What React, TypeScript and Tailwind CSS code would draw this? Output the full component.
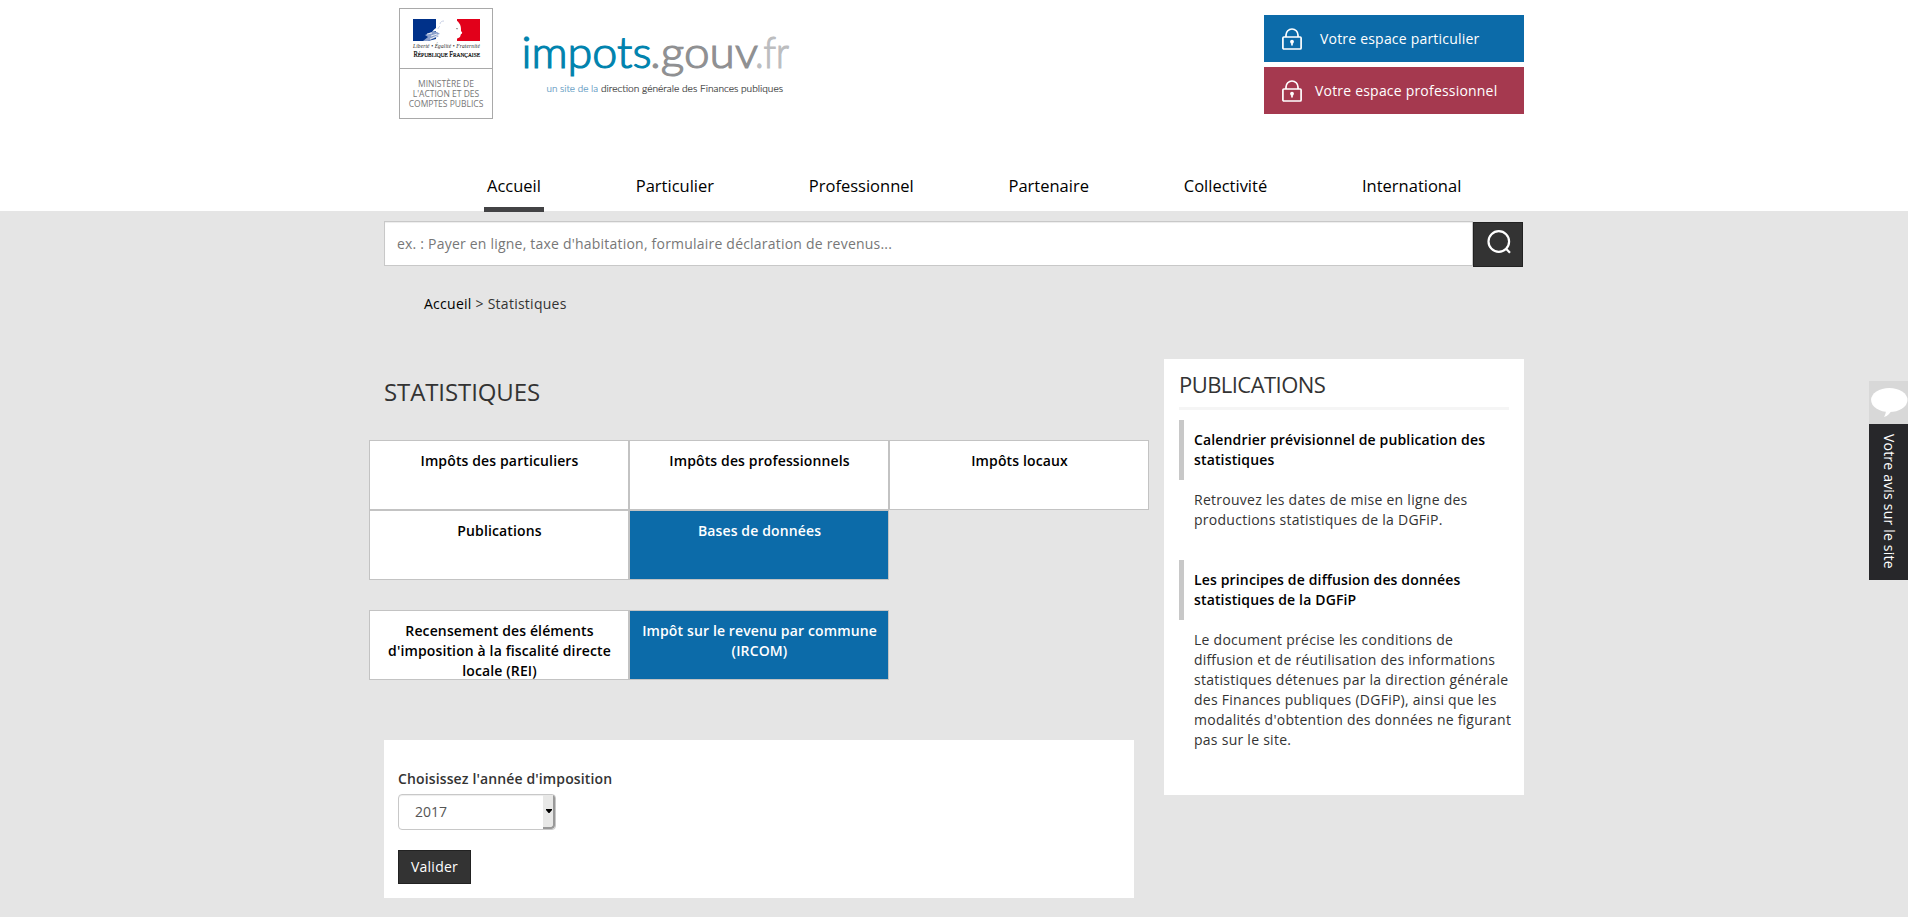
import React from "react";

function MinistryLogo() {
  return (
    <div className="flex h-[111px] w-[94px] flex-col border border-[#a9a9a9] bg-white">
      <svg width="92" height="59" viewBox="400 9 92 59" className="block">
        <rect x="413" y="19" width="23" height="22" fill="#003189" />
        <rect x="457" y="19" width="23" height="22" fill="#e2001a" />
        <path
          d="M435 19h8c-2 1-4 2-4 4-2 1-3 3-3 5-2 1-3 3-4 4 3-1 6-1 8 1l-2 3 6 1-8 2-8 2h28c0-3 3-3 4-4l1-3c1 0 2-1 0-3 0-3 0-6-2-8-1-2-3-3-5-4z"
          fill="#fff"
        />
        <path d="M425 35l6-3 6 0 3 2-4 1 3 1-4 2-7 3h-5l5-4z" fill="#8ba0cb" />
        <path d="M427 34l5-1M431 36l6-2M430 39l7-3" stroke="#fff" strokeWidth="0.8" />
        <path d="M444 21c-2 0-4 1-4 3M440 26c-1 1-2 2-2 3" stroke="#bbc4de" strokeWidth="0.8" fill="none" />
        <path d="M456 28l2 .6-1 1z" fill="#555" />
        <text x="413" y="47.6" fontFamily="Liberation Serif, serif" fontStyle="italic" fontSize="6.2" textLength="67" lengthAdjust="spacingAndGlyphs" fill="#222" letterSpacing="0.2">
          Liberté • Égalité • Fraternité
        </text>
        <text x="413.5" y="57" fontFamily="Liberation Serif, serif" fill="#000" stroke="#000" strokeWidth="0.2" textLength="66.5" lengthAdjust="spacingAndGlyphs" letterSpacing="0">
          <tspan fontSize="7.4">R</tspan>
          <tspan fontSize="6.2">ÉPUBLIQUE </tspan>
          <tspan fontSize="7.4">F</tspan>
          <tspan fontSize="6.2">RANÇAISE</tspan>
        </text>
      </svg>
      <div className="flex grow flex-col items-center border-t border-[#a9a9a9] pt-[10px] text-[8.5px] leading-[10px] tracking-[0px] text-[#777]">
        <span>MINISTÈRE DE</span>
        <span>L'ACTION ET DES</span>
        <span className="whitespace-nowrap">COMPTES PUBLICS</span>
      </div>
    </div>
  );
}

function SiteLogo() {
  return (
    <svg width="280" height="84" viewBox="515 22 280 84" className="block">
      <g fontFamily="Lato, sans-serif" fontSize="42.5" fontWeight="300" strokeWidth="1.2" letterSpacing="0">
        <text x="521.5" y="68" textLength="130" lengthAdjust="spacingAndGlyphs" fill="#0083ae" stroke="#0083ae">impots</text>
        <text x="650" y="68" textLength="108" lengthAdjust="spacingAndGlyphs" fill="#8f9092" stroke="#8f9092">.gouv</text>
        <text x="755" y="68" textLength="34" lengthAdjust="spacingAndGlyphs" fill="#bcbdbf" stroke="#bcbdbf">.fr</text>
      </g>
      <g fontFamily="Lato, sans-serif" fontSize="9.8" fontWeight="300" strokeWidth="0.2" letterSpacing="0">
        <text x="546.5" y="91.7" textLength="51.5" lengthAdjust="spacingAndGlyphs" fill="#5f9bc4" stroke="#5f9bc4">un site de la</text>
        <text x="601" y="91.7" textLength="182" lengthAdjust="spacingAndGlyphs" fill="#3c3c3c" stroke="#3c3c3c">direction générale des Finances publiques</text>
      </g>
    </svg>
  );
}

function Lock() {
  return (
    <svg width="20" height="22" viewBox="0 0 20 22" fill="none" stroke="#fff" strokeWidth="1.7" className="block">
      <rect x="0.9" y="9" width="18.2" height="12" rx="1" />
      <path d="M4 9V7a6 6 0 0 1 12 0v2" />
      <circle cx="10" cy="13.7" r="1.9" fill="#fff" stroke="none" />
      <path d="M10 14v3.5" />
    </svg>
  );
}

const NAV = ["Accueil", "Particulier", "Professionnel", "Partenaire", "Collectivité", "International"];

function Tile({ active, children }: { active?: boolean; children: React.ReactNode }) {
  return (
    <a
      className={`h-[70px] w-[260px] overflow-hidden border border-[#c3c3c3] pt-2.5 pr-[9px] pl-2.5 text-center font-semibold tracking-[0.13px] ${
        active ? "bg-[#0c6ba9] text-white" : "bg-white text-black"
      }`}
    >
      {children}
    </a>
  );
}

function Publication({ title, children }: { title: string; children: React.ReactNode }) {
  return (
    <article className="mb-[30px]">
      <h3 className="border-l-[5px] border-[#c8c8c8] py-2.5 pl-2.5 font-semibold tracking-[0.15px] text-black">{title}</h3>
      <p className="-mr-3 pt-2.5 pr-1.5 pl-[15px]">{children}</p>
    </article>
  );
}

export default function App() {
  return (
    <div className="relative h-[917px] overflow-hidden bg-[#e5e5e5] font-['Open_Sans',sans-serif] text-sm leading-5 tracking-[0.26px] text-[#333] [font-feature-settings:'liga']">
      <header className="h-[211px] bg-white">
        <div className="mx-auto flex h-[165px] w-[1140px] items-start">
          <div className="pt-2 pl-[15px]">
            <MinistryLogo />
          </div>
          <div className="pt-[22px] pl-[22px]">
            <SiteLogo />
          </div>
          <div className="ml-auto flex w-[260px] flex-col gap-[5px] pt-[15px] tracking-[0.2px]">
            <a className="flex h-[47px] items-center bg-[#0c6ba9] pl-[18px] text-white">
              <Lock />
              <span className="pl-[18px]">Votre espace particulier</span>
            </a>
            <a className="flex h-[47px] items-center bg-[#a5394f] pl-[18px] text-white">
              <Lock />
              <span className="pl-[13px]">Votre espace professionnel</span>
            </a>
          </div>
        </div>
        <nav className="mx-auto flex h-[47px] w-[1140px] gap-[88.8px] pl-[100px] text-[16.5px] tracking-normal text-black">
          {NAV.map((n, i) => (
            <a key={n} className={`h-[47px] px-[3px] pt-[11px] ${i === 0 ? "border-b-[5px] border-[#434345]" : ""}`}>
              {n}
            </a>
          ))}
        </nav>
      </header>

      <main className="mx-auto w-[1140px] pt-2.5">
        <div className="flex">
          <div className="flex h-[45px] w-[1089px] items-center border border-[#c8c8c8] bg-white pl-3 tracking-[0.21px] text-[#777] shadow-[inset_0_1px_1px_rgba(0,0,0,0.075)]">
            ex. : Payer en ligne, taxe d'habitation, formulaire déclaration de revenus...
          </div>
          <div className="mt-px h-[45px] w-[50px] border border-[#222] bg-[#333] pt-[7px] pl-[13px]">
            <svg width="24" height="24" viewBox="0 0 24 24" fill="none" stroke="#fff" strokeWidth="2.2">
              <circle cx="11.8" cy="11.5" r="10.3" />
              <path d="M18.8 18.5l4.2 4.3" />
            </svg>
          </div>
        </div>

        <div className="mt-[27px] pl-10">
          <span className="text-black">Accueil</span> &gt; Statistiques
        </div>

        <div className="mt-[45px] flex items-start justify-between">
          <section className="w-[750px]">
            <h1 className="pt-[17px] text-2xl leading-8 tracking-[-0.1px]">STATISTIQUES</h1>
            <div className="-mx-[15px] mt-8 flex w-[780px] flex-wrap">
              <Tile>Impôts des particuliers</Tile>
              <Tile>Impôts des professionnels</Tile>
              <Tile>Impôts locaux</Tile>
              <Tile>Publications</Tile>
              <Tile active>Bases de données</Tile>
            </div>
            <div className="-mx-[15px] mt-[30px] flex w-[780px]">
              <Tile>Recensement des éléments d'imposition à la fiscalité directe locale (REI)</Tile>
              <Tile active>Impôt sur le revenu par commune (IRCOM)</Tile>
            </div>
            <form className="mt-[60px] h-[158px] bg-white pt-[29px] pl-3.5">
              <label className="block font-semibold tracking-[0.13px]">Choisissez l'année d'imposition</label>
              <div className="mt-[5px] flex h-9 w-[158px] items-stretch overflow-hidden rounded border border-[#c8c8c8] shadow-[inset_0_1px_1px_rgba(0,0,0,0.075)]">
                <span className="grow pt-[7px] pl-4 tracking-normal text-[#555]">2017</span>
                <span className="flex w-3 items-center justify-center rounded-br-sm border-r-2 border-b-2 border-[#999] bg-[#e8e8e7]">
                  <svg width="6" height="4" viewBox="0 0 6 4" className="relative left-px">
                    <path d="M0 0h6v1L3.5 4h-1L0 1z" fill="#000" />
                  </svg>
                </span>
              </div>
              <button type="button" className="mt-5 block h-[34px] w-[73px] border border-[#222] bg-[#333] text-white">
                Valider
              </button>
            </form>
          </section>

          <aside className="h-[436px] w-[360px] bg-white px-[15px] pt-2.5">
            <h2 className="h-[41px] border-b-[3px] border-[#f5f5f5] pt-[3px] text-[22px] leading-6 tracking-[-0.55px]">PUBLICATIONS</h2>
            <div className="pt-2.5">
              <Publication title="Calendrier prévisionnel de publication des statistiques">
                Retrouvez les dates de mise en ligne des productions statistiques de la DGFiP.
              </Publication>
              <Publication title="Les principes de diffusion des données statistiques de la DGFiP">
                Le document précise les conditions de
                <br />
                diffusion et de réutilisation des informations statistiques détenues par la direction générale des Finances
                publiques (DGFiP), ainsi que les
                <br />
                modalités d'obtention des données ne figurant pas sur le site.
              </Publication>
            </div>
          </aside>
        </div>
      </main>

      <div className="absolute top-[381px] right-0 w-[39px]">
        <div className="h-[43px] bg-[#d8d8d8] pt-[7px] pl-0.5">
          <svg width="37" height="30" viewBox="0 0 37 30" fill="#fff" className="block">
            <ellipse cx="18.3" cy="12" rx="18.2" ry="12" />
            <path d="M15 22c0 3-1 5-2 7 4-1 6-4 8-7z" />
          </svg>
        </div>
        <div className="flex h-[156px] w-[39px] items-center justify-center bg-[#27272a] pb-0.5 text-white">
          <span className="tracking-[0.2px] [writing-mode:vertical-rl]">Votre avis sur le site</span>
        </div>
      </div>
    </div>
  );
}
